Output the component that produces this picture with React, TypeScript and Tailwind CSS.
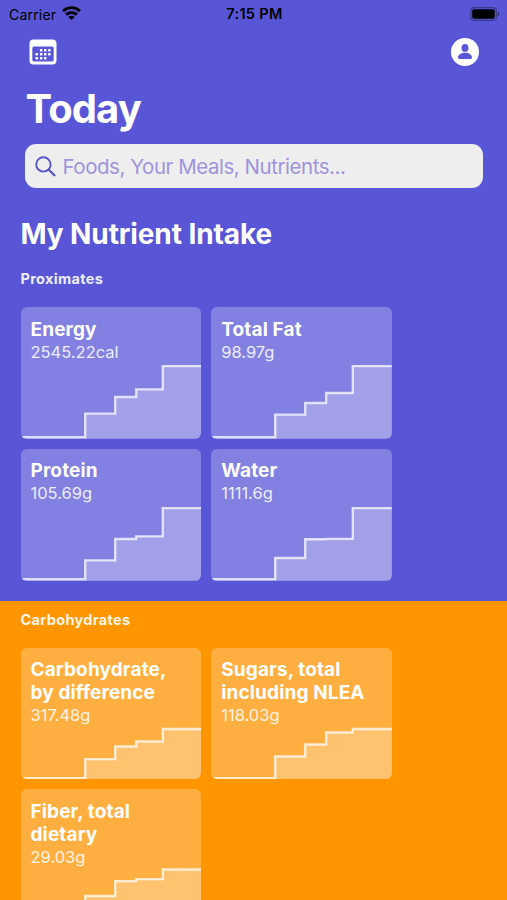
type Nutrient = {
  name: string[];
  amount: string;
  levels: [number, number, number, number];
};

const proximates: Nutrient[] = [
  { name: ['Energy'], amount: '2545.22cal', levels: [107, 90.3, 82.6, 59.3] },
  { name: ['Total Fat'], amount: '98.97g', levels: [108, 96.3, 86.3, 59.3] },
  { name: ['Protein'], amount: '105.69g', levels: [111.7, 90.3, 87.6, 59.3] },
  { name: ['Water'], amount: '1111.6g', levels: [109.3, 90.6, 90.2, 59.3] },
];

const carbohydrates: Nutrient[] = [
  { name: ['Carbohydrate,', 'by difference'], amount: '317.48g', levels: [111.5, 98.8, 93.8, 81.2] },
  { name: ['Sugars, total', 'including NLEA'], amount: '118.03g', levels: [108.8, 96.8, 84.8, 81.2] },
  { name: ['Fiber, total', 'dietary'], amount: '29.03g', levels: [107.4, 92.4, 90.4, 80.7] },
];

function StepChart({ levels }: { levels: Nutrient['levels'] }) {
  const [a, b, c, d] = levels;
  const steps = `M64.3 130.7V${a}H94.3V${b}H115.3V${c}H142V${d}H181`;
  return (
    <svg className="absolute inset-0 h-full w-full" viewBox="0 0 181 132" preserveAspectRatio="none" fill="none">
      <path d={`${steps}V132H64.3Z`} fill="#fff" fillOpacity=".25" />
      <path d={`M0 130.7H${steps.slice(1).replace(' 130.7', '')}`} stroke="#fff" strokeOpacity=".74" strokeWidth="2.4" />
    </svg>
  );
}

function Card({ item }: { item: Nutrient }) {
  return (
    <article className="relative h-[131.6px] overflow-hidden rounded-[6px] bg-white/25 pt-[10.5px] pl-[10px] whitespace-nowrap text-white">
      <StepChart levels={item.levels} />
      <h3 className="relative text-[19px] leading-[23px] font-bold tracking-[0.13px]">
        {item.name.map((line) => (
          <span key={line} className="block">{line}</span>
        ))}
      </h3>
      <p className="relative text-[16.5px] leading-[22px] text-white/85">{item.amount}</p>
    </article>
  );
}

function Section({ title, items }: { title: string; items: Nutrient[] }) {
  return (
    <>
      <h2 className="text-[14.5px] leading-[18px] font-bold tracking-[0.32px] text-white/90">{title}</h2>
      <div className="mt-[19px] grid w-[371.5px] grid-cols-2 gap-[10px]">
        {items.map((item) => (
          <Card key={item.amount} item={item} />
        ))}
      </div>
    </>
  );
}

function StatusBar() {
  return (
    <div className="grid h-7 shrink-0 grid-cols-3 items-center pr-[7px] pl-[9px] text-[14px] text-black">
      <div className="flex items-center gap-[6px]">
        <span className="tracking-[0.2px]">Carrier</span>
        <svg className="-mt-[2px]" width="19" height="14" viewBox="0 0 19 14" fill="none" stroke="#000" strokeWidth="2.9">
          <path d="M1.1 5.1a12 12 0 0 1 16.8 0M4.1 8.6a7.8 7.8 0 0 1 10.8 0" />
          <path d="M9.5 14 6.3 11a4.6 4.6 0 0 1 6.4 0Z" fill="#000" stroke="none" />
        </svg>
      </div>
      <span className="text-center text-[14.5px] font-semibold tracking-[0.35px]">7:15 PM</span>
      <svg className="-mt-px justify-self-end" width="30" height="14" viewBox="0 0 30 14">
        <rect x=".8" y=".7" width="25.6" height="12.6" rx="3.5" fill="none" stroke="#000" strokeOpacity=".35" strokeWidth="1.2" />
        <rect x="2.2" y="2.2" width="22.6" height="9.6" rx="2" fill="#000" />
        <path d="M27.6 5v4c2.2-.7 2.2-3.3 0-4Z" fill="#000" fillOpacity=".45" />
      </svg>
    </div>
  );
}

function CalendarIcon() {
  const dots = [
    [12.1, 11.2], [16.2, 11.2], [20.3, 11.2],
    [7.7, 15.1], [12.1, 15.1], [16.2, 15.1], [20.3, 15.1],
    [7.7, 19.1], [12.1, 19.1], [16.2, 19.1],
  ];
  return (
    <svg width="28" height="26" viewBox="0 0 28 26">
      <path
        fill="#fff"
        fillRule="evenodd"
        d="M4.5.5h19A4 4 0 0 1 27.5 4.5v17A4 4 0 0 1 23.5 25.5h-19A4 4 0 0 1 .5 21.5v-17A4 4 0 0 1 4.5.5ZM5 7.6a1.7 1.7 0 0 0-1.7 1.7v11.5A1.7 1.7 0 0 0 5 22.5h18a1.7 1.7 0 0 0 1.7-1.7V9.3A1.7 1.7 0 0 0 23 7.6Z"
      />
      {dots.map(([x, y]) => (
        <rect key={`${x}-${y}`} x={x - 1.2} y={y - 1.2} width="2.5" height="2.5" rx=".6" fill="#fff" />
      ))}
    </svg>
  );
}

function ProfileIcon() {
  return (
    <svg width="28" height="28" viewBox="0 0 28 28">
      <circle cx="14" cy="14" r="14" fill="#fff" />
      <ellipse cx="14" cy="9.9" rx="3.5" ry="3.9" fill="#5856d6" />
      <path d="M7 19.6c0-2.7 3-4.8 7-4.8s7 2.1 7 4.8c0 .9-.5 1.3-1.4 1.3H8.4c-.9 0-1.4-.4-1.4-1.3Z" fill="#5856d6" />
    </svg>
  );
}

export default function App() {
  return (
    <main className="flex h-[900px] w-[507px] flex-col overflow-hidden bg-[#5856d6] font-['Inter','Liberation_Sans',sans-serif]">
      <StatusBar />
      <header className="flex h-[48px] shrink-0 items-center justify-between pr-[28px] pl-[29px]">
        <CalendarIcon />
        <ProfileIcon />
      </header>
      <h1 className="mt-[9px] shrink-0 pl-[25.5px] text-[40px] leading-[48px] font-bold tracking-[-0.9px] text-white">Today</h1>
      <div className="mt-[11px] ml-[25px] flex h-[44px] w-[457.5px] shrink-0 items-center rounded-[11px] bg-[#eeeeef] pl-[10px]">
        <svg width="21" height="21" viewBox="0 0 21 21" fill="none" stroke="#5856c6" strokeWidth="1.9" strokeLinecap="round">
          <circle cx="8.4" cy="8.4" r="7.2" />
          <path d="m13.8 13.8 5.6 5.5" strokeWidth="2.3" />
        </svg>
        <span className="mt-[2px] ml-[6.5px] text-[20.5px] leading-[26px] tracking-[-0.46px] text-[#a093dc]">Foods, Your Meals, Nutrients...</span>
      </div>
      <section className="h-[412.5px] shrink-0 pt-[28px] pl-[20.5px]">
        <h2 className="mb-[18.4px] text-[28px] leading-[36px] font-bold tracking-[-0.1px] text-white">My Nutrient Intake</h2>
        <Section title="Proximates" items={proximates} />
      </section>
      <section className="flex-1 bg-[#ff9500] pt-[10px] pl-[20.5px]">
        <Section title="Carbohydrates" items={carbohydrates} />
      </section>
    </main>
  );
}
